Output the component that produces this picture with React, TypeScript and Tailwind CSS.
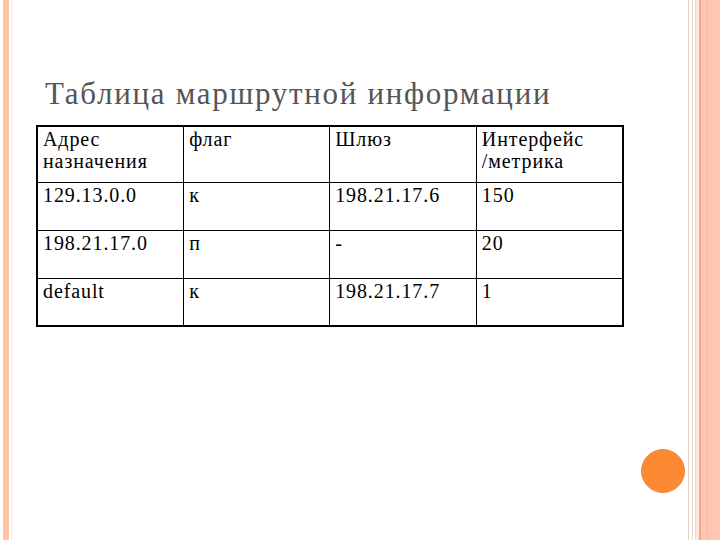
import React from "react";

const rows = [
  ["129.13.0.0", "к", "198.21.17.6", "150"],
  ["198.21.17.0", "п", "-", "20"],
  ["default", "к", "198.21.17.7", "1"],
];

export default function App() {
  return (
    <div className="relative w-[720px] h-[540px] bg-white flex overflow-hidden font-['Liberation_Serif',serif]">
      {/* left decoration */}
      <div className="flex h-full">
        <div className="w-[3px] bg-white" />
        <div className="w-[6px] bg-[#ffc3a8]" />
        <div className="w-[2px] bg-white" />
        <div className="w-[1px] bg-[#ece6f2]" />
        <div className="w-[1px] bg-white" />
        <div className="w-[1px] bg-[#f8f6e4]" />
      </div>

      {/* main content */}
      <div className="flex-1 flex flex-col pl-[22px] pt-[74px]">
        <h1 className="ml-[9px] text-[31px] leading-[40px] tracking-[1.7px] text-[#555555] font-['Liberation_Serif',serif]">
          Таблица маршрутной информации
        </h1>
        <table className="mt-[11px] border-collapse border-[2px] border-black text-[20px] tracking-[0.9px] text-black w-[588px] font-['Liberation_Serif',serif]">
          <tbody>
            <tr className="h-[56px]">
              {[["Адрес", "назначения"], ["флаг"], ["Шлюз"], ["Интерфейс", "/метрика"]].map((t, i) => (
                <td
                  key={i}
                  className="w-[147px] border border-black align-top px-[5px] pt-[1px] leading-[22px]"
                >
                  {t.map((line, li) => (
                    <div key={li}>{line}</div>
                  ))}
                </td>
              ))}
            </tr>
            {rows.map((r, ri) => (
              <tr key={ri} className="h-[48px]">
                {r.map((c, ci) => (
                  <td
                    key={ci}
                    className="w-[147px] border border-black align-top px-[5px] pt-[1px] leading-[22px]"
                  >
                    {c}
                  </td>
                ))}
              </tr>
            ))}
          </tbody>
        </table>
      </div>

      {/* right decoration */}
      <div className="flex h-full">
        <div className="w-[1px] bg-[#e6d2c6]" />
        <div className="w-[3px] bg-white" />
        <div className="w-[1px] bg-[#f0dccd]" />
        <div className="w-[2px] bg-white" />
        <div className="w-[1px] bg-[#f0d8c8]" />
        <div className="w-[3px] bg-[#ffe9dd]" />
        <div className="w-[2px] bg-[#f0a890]" />
        <div className="w-[6px] bg-[#ffc6b4]" />
        <div className="w-[1px] bg-[#f6b8a4]" />
        <div className="w-[12px] bg-[#ffc6b4]" />
      </div>

      {/* orange circle */}
      <div className="absolute left-[641px] top-[449px] w-[44px] h-[44px] rounded-full bg-[#fd8a33] border border-[#e98a4a]" />
    </div>
  );
}
